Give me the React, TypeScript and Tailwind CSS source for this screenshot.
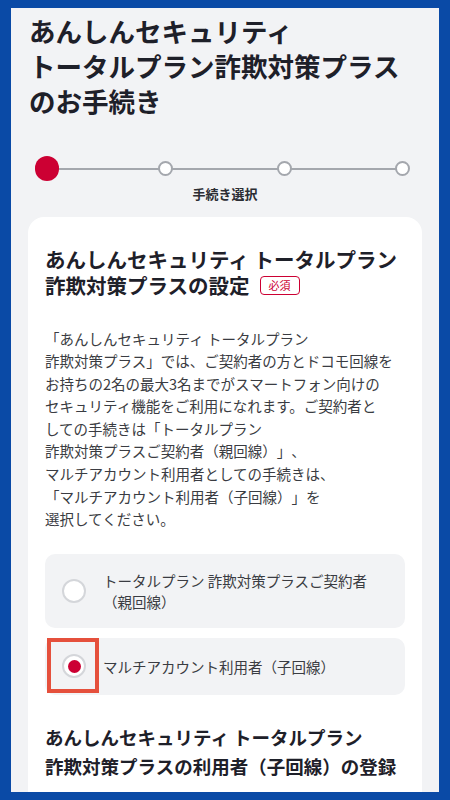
const FONT = { fontFamily: '"Noto Sans CJK JP", "Noto Sans", sans-serif' };

function Stepper() {
  return (
    <div className="mt-[38px] px-[24px]">
      <div className="relative flex items-center justify-between w-[380px]">
        <div className="absolute left-[12px] right-[12px] top-1/2 h-[2px] -translate-y-1/2 bg-[#a4a7ad]" />
        <div className="relative z-10 flex w-6 justify-center">
          <div className="h-[25px] w-[25px] rounded-full bg-[#cc0033]" />
        </div>
        {[0, 1, 2].map((i) => (
          <div key={i} className="relative z-10 flex w-6 justify-center">
            <div className="h-[15px] w-[15px] rounded-full border-2 border-[#a4a7ad] bg-white" />
          </div>
        ))}
      </div>
      <p className="mt-[3px] text-center text-[13px] font-bold text-[#2b2d33]">手続き選択</p>
    </div>
  );
}

function Radio({ checked }: { checked?: boolean }) {
  return (
    <div className="flex h-[24px] w-[24px] shrink-0 items-center justify-center rounded-full border-2 border-[#d4d6da] bg-white">
      {checked && <div className="h-[13px] w-[13px] rounded-full bg-[#cc0033]" />}
    </div>
  );
}

export default function App() {
  return (
    <div style={FONT} className="h-[800px] w-[450px] overflow-hidden bg-[#0a4aa6] px-[11px] pt-[8px] pb-[8px] [text-spacing-trim:space-all]">
      <div className="h-full overflow-hidden bg-[#f2f3f5]">
        <h1 className="px-[18px] pt-[5px] text-[26.5px] font-bold leading-[35px] text-[#1e2029]">
          あんしんセキュリティ
          <br />
          トータルプラン詐欺対策プラス
          <br />
          のお手続き
        </h1>

        <Stepper />

        <div className="mx-[17px] mt-[13px] rounded-t-[16px] bg-white px-[17px] pt-[29px] pb-[40px]">
          <h2 className="text-[20.5px] font-bold leading-[26px] text-[#1e2029]">
            あんしんセキュリティ トータルプラン
            <br />
            詐欺対策プラスの設定
            <span className="ml-[10px] inline-block translate-y-[-2px] rounded-[4px] border-[1.5px] border-[#cc0033] px-[8px] align-middle text-[11px] font-normal leading-[17px] text-[#cc0033]">
              必須
            </span>
          </h2>

          <p className="mt-[30px] text-[14.5px] leading-[22.6px] text-[#3a3c42]">
            「あんしんセキュリティ トータルプラン
            <br />
            詐欺対策プラス」では、ご契約者の方とドコモ回線を
            <br />
            お持ちの2名の最大3名までがスマートフォン向けの
            <br />
            セキュリティ機能をご利用になれます。ご契約者と
            <br />
            しての手続きは「トータルプラン
            <br />
            詐欺対策プラスご契約者（親回線）」、
            <br />
            マルチアカウント利用者としての手続きは、
            <br />
            「マルチアカウント利用者（子回線）」を
            <br />
            選択してください。
          </p>

          <div className="mt-[23px] flex flex-col gap-[10px]">
            <div className="flex items-center rounded-[10px] bg-[#f2f3f5] py-[16px] pl-[17px] pr-[12px]">
              <Radio />
              <span className="ml-[17px] text-[14.5px] leading-[21px] text-[#3a3c42]">
                トータルプラン 詐欺対策プラスご契約者
                <br />
                （親回線）
              </span>
            </div>
            <div className="relative flex h-[57px] items-center rounded-[10px] bg-[#f2f3f5] pl-[17px] pr-[12px]">
              <div className="absolute left-[2px] top-0 h-[55px] w-[52px] border-[4px] border-[#e5503c]" />
              <Radio checked />
              <span className="ml-[17px] text-[14.5px] leading-[21px] text-[#3a3c42]">
                マルチアカウント利用者（子回線）
              </span>
            </div>
          </div>

          <h3 className="mt-[28px] text-[18.5px] font-bold leading-[29px] text-[#1e2029]">
            あんしんセキュリティ トータルプラン
            <br />
            詐欺対策プラスの利用者（子回線）の登録
          </h3>
        </div>
      </div>
    </div>
  );
}
